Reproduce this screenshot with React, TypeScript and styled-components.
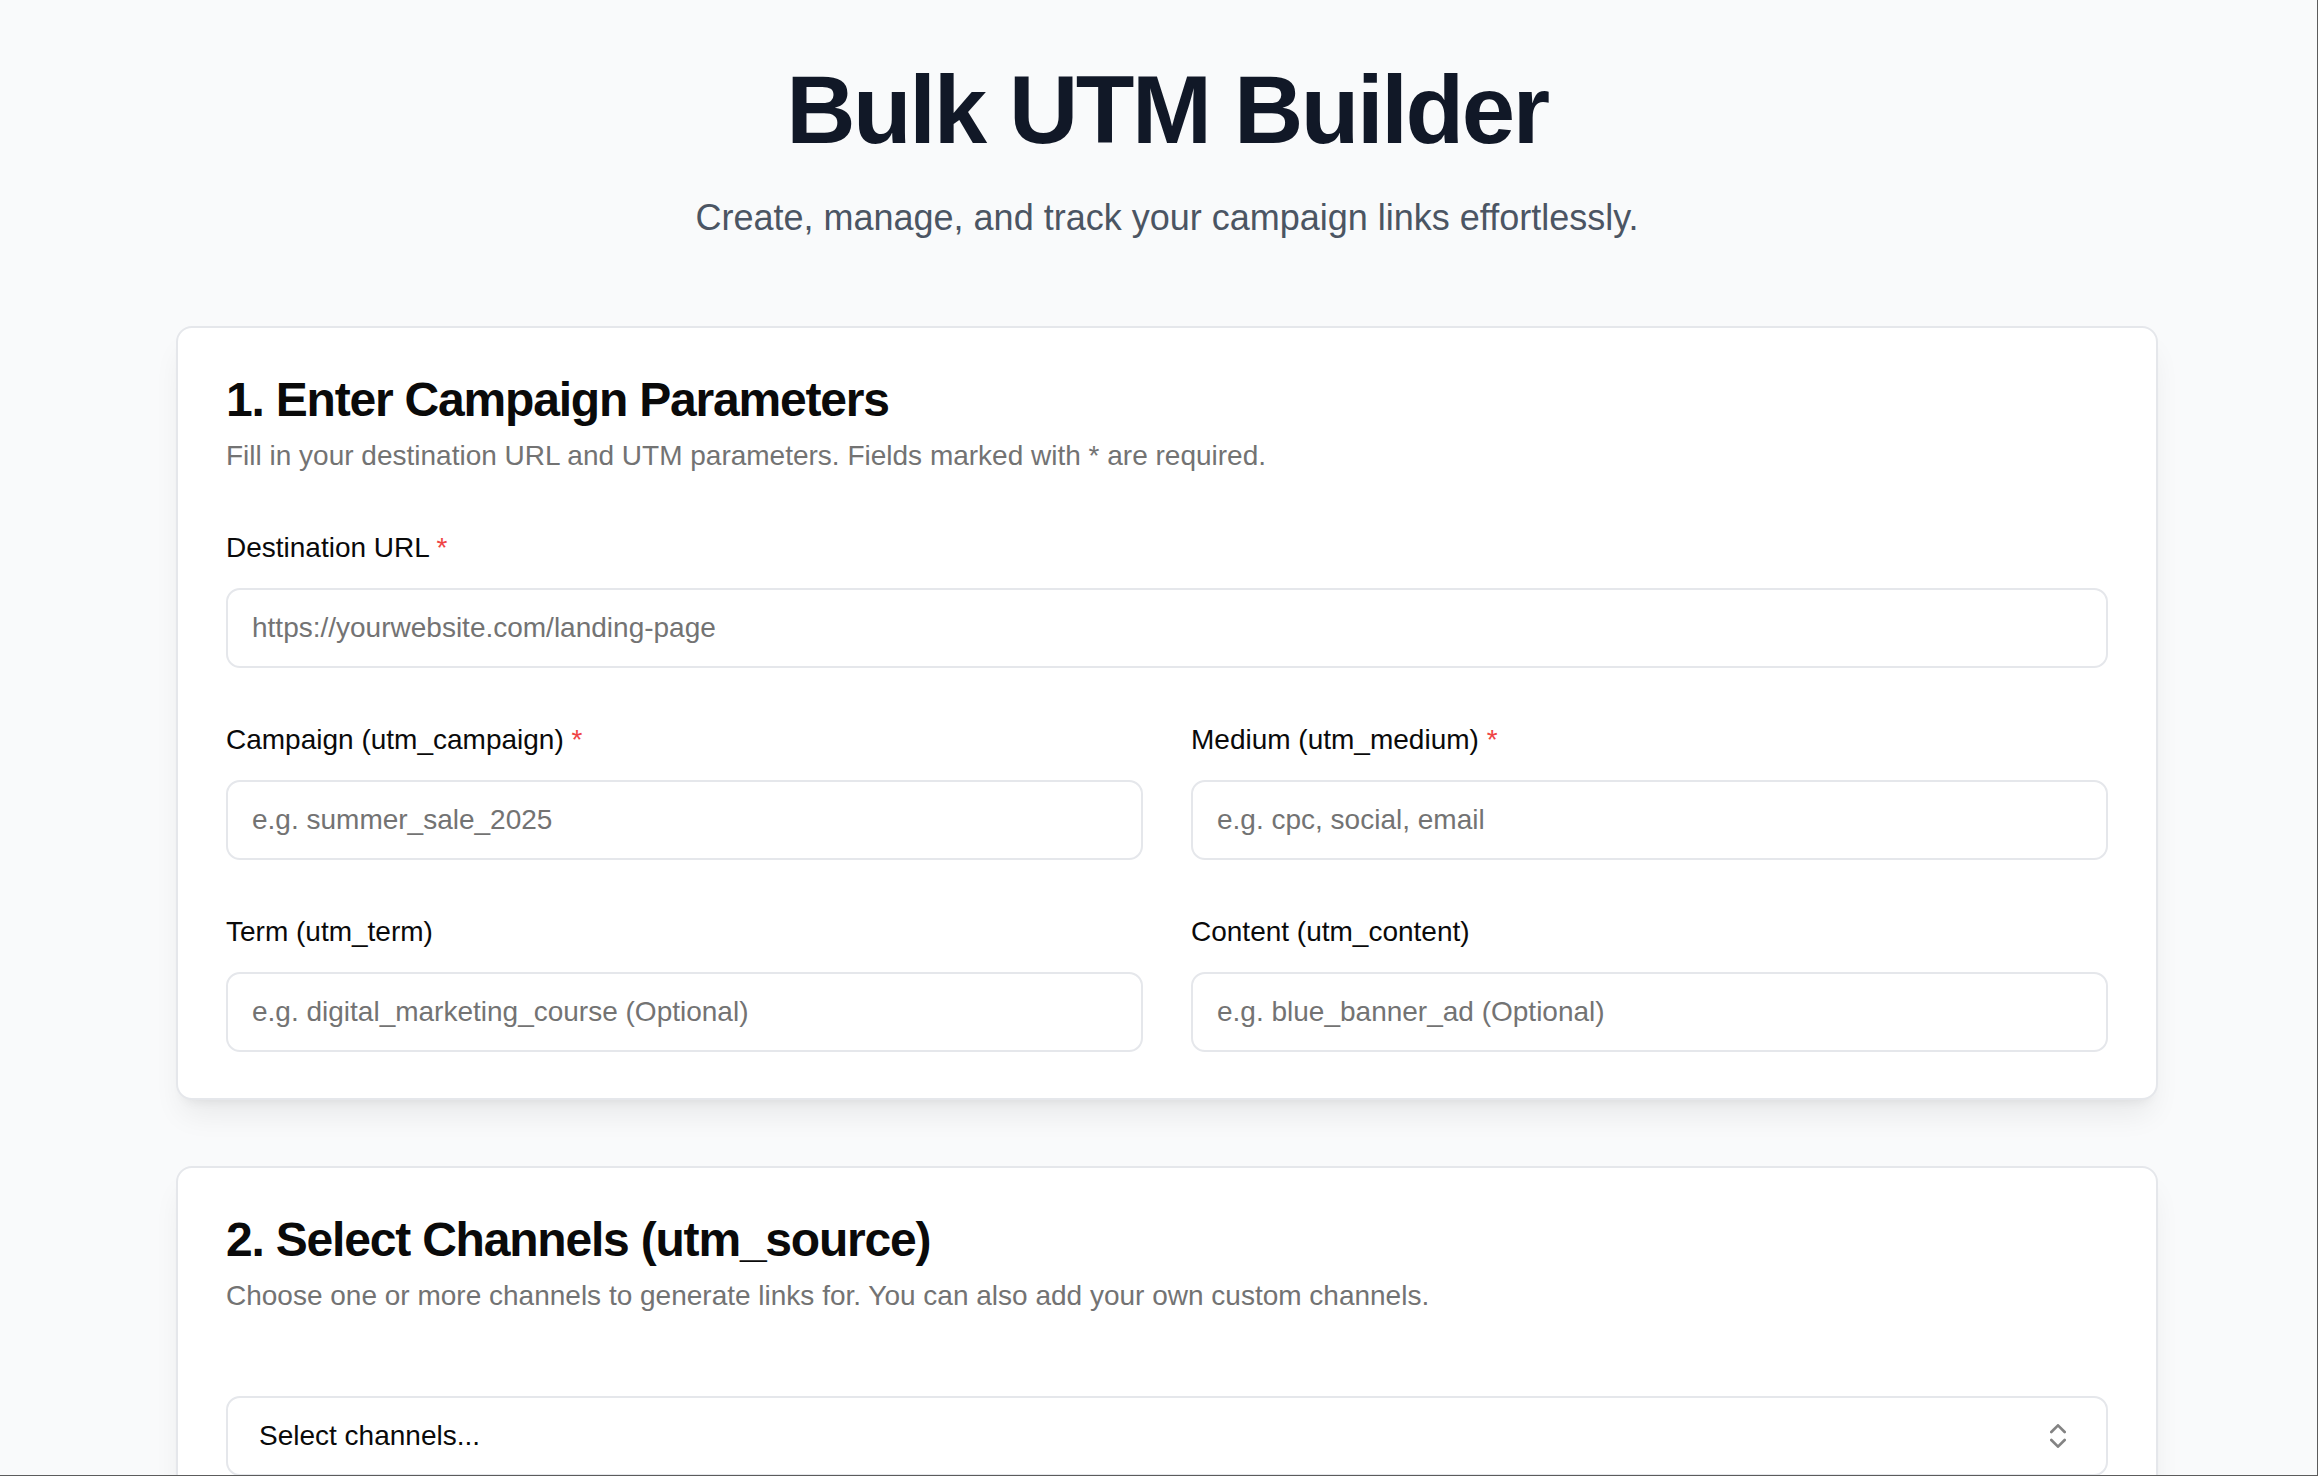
import { ChevronsUpDown } from 'lucide-react'
import styled, { createGlobalStyle } from 'styled-components'

const GlobalStyle = createGlobalStyle`
  *, *::before, *::after {
    box-sizing: border-box;
  }

  body {
    margin: 0;
    background: #f9fafb;
    font-family: 'Liberation Sans', Arial, Helvetica, sans-serif;
    color: #0a0a0a;
  }

  /* thin window frame seen on the right and bottom edges of the capture */
  body::after {
    content: '';
    position: fixed;
    inset: 0;
    border-right: 1px solid #5c5c5c;
    border-bottom: 1px solid #5c5c5c;
    pointer-events: none;
  }
`

const Page = styled.main`
  min-height: 100vh;
  padding: 62px 160px 0 176px;
  display: flex;
  flex-direction: column;
`

const Header = styled.header`
  display: flex;
  flex-direction: column;
  align-items: center;
  margin-bottom: 80px;
`

const Title = styled.h1`
  margin: 0;
  font-size: 96px;
  line-height: 1;
  font-weight: 700;
  letter-spacing: -0.025em;
  color: #111827;
`

const Subtitle = styled.p`
  margin: 32px 0 0;
  font-size: 36px;
  line-height: 56px;
  color: #4b5563;
`

const Stack = styled.div`
  display: flex;
  flex-direction: column;
  gap: 66px;
`

const Card = styled.section`
  background: #fff;
  border: 2px solid #e5e7eb;
  border-radius: 16px;
  padding: 48px 48px 46px;
  box-shadow: 0 20px 30px -6px rgba(0, 0, 0, 0.07), 0 8px 12px -8px rgba(0, 0, 0, 0.08);
  display: flex;
  flex-direction: column;
`

const CardHead = styled.div<{ $gap: number }>`
  display: flex;
  flex-direction: column;
  gap: 12px;
  margin-bottom: ${(p) => p.$gap}px;
`

const CardTitle = styled.h2`
  margin: 0;
  font-size: 48px;
  line-height: 1;
  font-weight: 700;
  letter-spacing: -0.025em;
  color: #0a0a0a;
`

const CardText = styled.p`
  margin: 0;
  font-size: 28px;
  line-height: 40px;
  color: #737373;
`

const Fields = styled.div`
  display: flex;
  flex-direction: column;
  gap: 58px;
`

const Grid = styled.div`
  display: grid;
  grid-template-columns: 1fr 1fr;
  column-gap: 48px;
  row-gap: 58px;
`

const Field = styled.div`
  display: flex;
  flex-direction: column;
  gap: 26px;
`

const Label = styled.label`
  font-size: 28px;
  line-height: 28px;
  font-weight: 500;
  color: #0a0a0a;
`

const Req = styled.span`
  color: #ef4444;
`

const Input = styled.input`
  height: 80px;
  width: 100%;
  padding: 0 24px;
  border: 2px solid #e5e7eb;
  border-radius: 14px;
  background: #fff;
  font-family: inherit;
  font-size: 28px;
  color: #0a0a0a;
  outline: none;

  &::placeholder {
    color: #737373;
  }
`

const SelectButton = styled.button`
  height: 80px;
  width: 100%;
  padding: 0 32px 0 31px;
  border: 2px solid #e5e7eb;
  border-radius: 14px;
  background: #fff;
  display: flex;
  align-items: center;
  justify-content: space-between;
  font-family: inherit;
  font-size: 28px;
  color: #0a0a0a;
  cursor: pointer;

  svg {
    color: #0a0a0a;
    opacity: 0.5;
    flex-shrink: 0;
  }
`

type FieldDef = {
  label: string
  placeholder: string
  required?: boolean
}

const gridFields: FieldDef[] = [
  { label: 'Campaign (utm_campaign)', placeholder: 'e.g. summer_sale_2025', required: true },
  { label: 'Medium (utm_medium)', placeholder: 'e.g. cpc, social, email', required: true },
  { label: 'Term (utm_term)', placeholder: 'e.g. digital_marketing_course (Optional)' },
  { label: 'Content (utm_content)', placeholder: 'e.g. blue_banner_ad (Optional)' },
]

function FormField({ label, placeholder, required }: FieldDef) {
  return (
    <Field>
      <Label>
        {label}
        {required && <Req> *</Req>}
      </Label>
      <Input placeholder={placeholder} />
    </Field>
  )
}

export default function App() {
  return (
    <>
      <GlobalStyle />
      <Page>
        <Header>
          <Title>Bulk UTM Builder</Title>
          <Subtitle>Create, manage, and track your campaign links effortlessly.</Subtitle>
        </Header>

        <Stack>
          <Card>
            <CardHead $gap={58}>
              <CardTitle>1. Enter Campaign Parameters</CardTitle>
              <CardText>
                Fill in your destination URL and UTM parameters. Fields marked with * are required.
              </CardText>
            </CardHead>
            <Fields>
              <FormField
                label="Destination URL"
                placeholder="https://yourwebsite.com/landing-page"
                required
              />
              <Grid>
                {gridFields.map((f) => (
                  <FormField key={f.label} {...f} />
                ))}
              </Grid>
            </Fields>
          </Card>

          <Card>
            <CardHead $gap={80}>
              <CardTitle>2. Select Channels (utm_source)</CardTitle>
              <CardText>
                Choose one or more channels to generate links for. You can also add your own custom
                channels.
              </CardText>
            </CardHead>
            <SelectButton type="button">
              <span>Select channels...</span>
              <ChevronsUpDown size={32} />
            </SelectButton>
          </Card>
        </Stack>
      </Page>
    </>
  )
}
